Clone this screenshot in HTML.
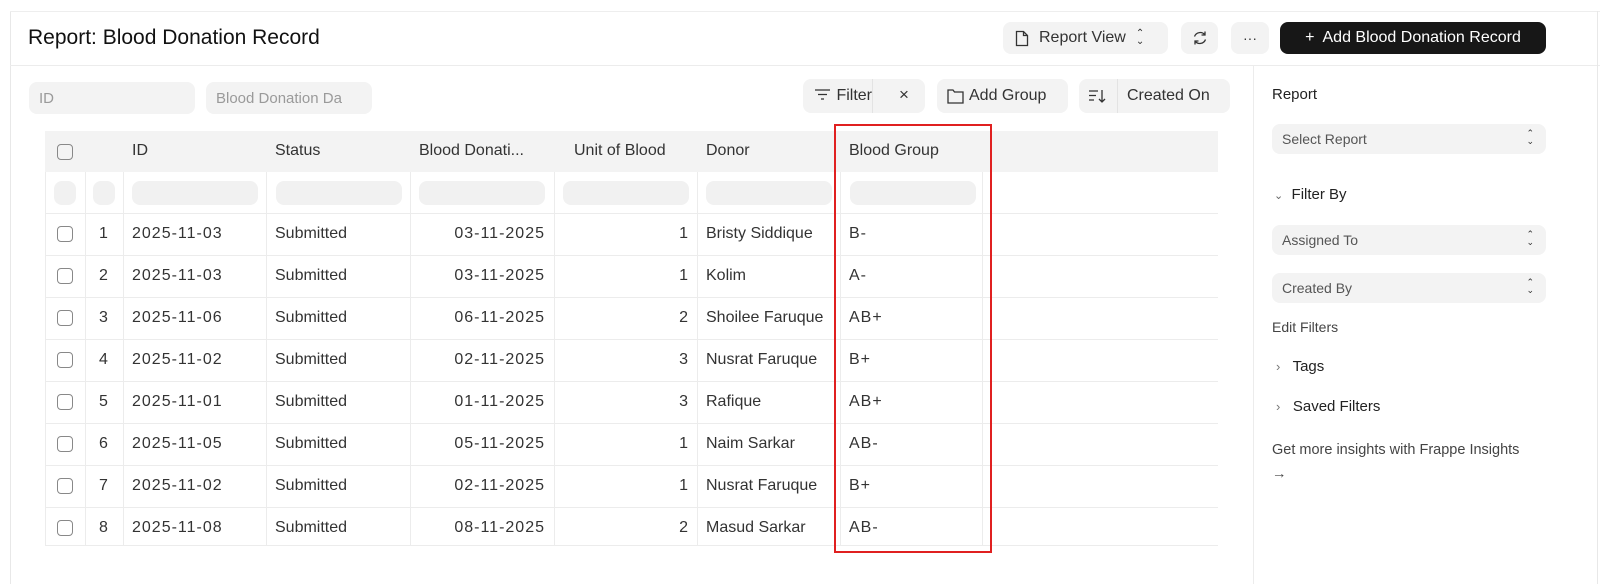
<!DOCTYPE html>
<html><head><meta charset="utf-8"><style>
*{box-sizing:border-box;margin:0;padding:0}
body{width:1600px;height:584px;background:#fff;font-family:"Liberation Sans",sans-serif;color:#1f1f1f;position:relative;overflow:hidden}
.a{position:absolute}
.btn{position:absolute;background:#f3f3f3;border-radius:8px;font-size:16px;color:#333;display:flex;align-items:center}
.inp{position:absolute;background:#f3f3f3;border-radius:8px;font-size:15px;color:#9a9a9a;display:flex;align-items:center;padding-left:10px}
.sel{position:absolute;left:1272px;width:274px;height:30px;background:#f3f3f3;border-radius:8px;font-size:14px;color:#555;display:flex;align-items:center;padding-left:10px}
.sel:after{content:"⌃\A⌄";white-space:pre;position:absolute;right:12px;top:5px;font-size:9px;line-height:8px;color:#333}
.cell{position:absolute;font-size:16px;color:#333;white-space:nowrap;overflow:hidden}
.hl{position:absolute;left:45px;width:1173px;height:1px;background:#ececec}
.vl{position:absolute;width:1px;background:#ececec}
.pill{position:absolute;height:24px;background:#f1f1f1;border-radius:8px}
.cb{position:absolute;left:57px;width:16px;height:16px;border:1.5px solid #888;border-radius:4px}
</style></head><body>
<div class="a" style="left:10px;top:11px;width:1px;height:573px;background:#e8e8e8"></div>
<div class="a" style="left:10px;top:11px;width:1590px;height:1px;background:#eee"></div>
<div class="a" style="left:10px;top:65px;width:1590px;height:1px;background:#ececec"></div>
<div class="a" style="left:1253px;top:66px;width:1px;height:518px;background:#ececec"></div>
<div class="a" style="left:1597px;top:11px;width:1px;height:573px;background:#e8e8e8"></div>
<div class="a" style="left:28px;top:26px;font-size:21px;color:#111">Report: Blood Donation Record</div>

<div class="btn" style="left:1003px;top:22px;width:165px;height:32px;padding-left:12px">
<svg width="14" height="17" viewBox="0 0 14 17" style="margin-right:10px"><path d="M1.5 1.5h7l4 4v10h-11z M8.5 1.5v4h4" fill="none" stroke="#333" stroke-width="1.3"/></svg>Report View <span style="font-size:10px;margin-left:10px;line-height:8px">⌃<br>⌄</span></div>
<div class="btn" style="left:1181px;top:22px;width:37px;height:32px;justify-content:center">
<svg width="18" height="18" viewBox="0 0 18 18"><path d="M3.5 7.5A6 6 0 0 1 14 6M14.5 10.5A6 6 0 0 1 4 12M14 2.5V6h-3.5M4 15.5V12h3.5" fill="none" stroke="#333" stroke-width="1.3"/></svg></div>
<div class="btn" style="left:1231px;top:22px;width:38px;height:32px;justify-content:center;font-size:14px">···</div>
<div class="btn" style="left:1280px;top:22px;width:266px;height:32px;background:#171717;color:#fff;justify-content:center;font-size:16px">+&nbsp; Add Blood Donation Record</div>

<div class="inp" style="left:29px;top:82px;width:166px;height:32px">ID</div>
<div class="inp" style="left:206px;top:82px;width:166px;height:32px;overflow:hidden;white-space:nowrap">Blood Donation Da</div>

<div class="btn" style="left:803px;top:79px;width:122px;height:34px">
<span style="margin-left:12px;width:17px;display:inline-block"><svg width="15" height="11"><path d="M0 1h15M3 5.5h9M6 10h3" stroke="#333" stroke-width="1.3"/></svg></span>&nbsp;Filter
<span class="a" style="left:69px;top:0;width:1px;height:34px;background:#e3e3e3"></span>
<span class="a" style="left:96px;top:6px;font-size:17px">×</span></div>
<div class="btn" style="left:937px;top:79px;width:131px;height:34px;padding-left:10px">
<svg width="17" height="16" viewBox="0 0 17 16" style="margin-right:5px"><path d="M1 2h5l1.5 2H16v11H1z" fill="none" stroke="#333" stroke-width="1.3"/></svg>Add Group</div>
<div class="btn" style="left:1079px;top:79px;width:151px;height:34px">
<svg width="18" height="14" style="margin-left:10px"><path d="M0 2h9M0 6.5h7M0 11h5M13 1v12M10 10l3 3 3-3" fill="none" stroke="#333" stroke-width="1.3"/></svg>
<span class="a" style="left:38px;top:0;width:1px;height:34px;background:#e3e3e3"></span>
<span style="margin-left:20px">Created On</span></div>

<div class="a" style="left:1272px;top:86px;font-size:15px;color:#222">Report</div>
<div class="sel" style="top:124px">Select Report</div>
<div class="a" style="left:1274px;top:186px;font-size:15px;color:#222"><span style="font-size:11px;color:#666">⌄</span>&nbsp; Filter By</div>
<div class="sel" style="top:225px">Assigned To</div>
<div class="sel" style="top:273px">Created By</div>
<div class="a" style="left:1272px;top:319px;font-size:14px;color:#444">Edit Filters</div>
<div class="a" style="left:1276px;top:358px;font-size:15px;color:#222"><span style="color:#777;font-size:13px">›</span>&nbsp;&nbsp; Tags</div>
<div class="a" style="left:1276px;top:398px;font-size:15px;color:#222"><span style="color:#777;font-size:13px">›</span>&nbsp;&nbsp; Saved Filters</div>
<div class="a" style="left:1272px;top:438px;font-size:14.5px;color:#444;line-height:24px">Get more insights with Frappe Insights<br>→</div>

<div class="a" style="left:45px;top:131px;width:1173px;height:41px;background:#f3f3f3"></div>
<div class="a" style="left:45px;top:172px;width:1px;height:373px;background:#ececec"></div>
<div class="hl" style="top:213px"></div>
<div class="hl" style="top:545px"></div>
<div id="t"></div>
<div class="cb" style="top:144px"></div>
<div class="cell" style="left:132px;top:142px">ID</div>
<div class="cell" style="left:275px;top:142px">Status</div>
<div class="cell" style="left:419px;top:142px">Blood Donati...</div>
<div class="cell" style="left:574px;top:142px">Unit of Blood</div>
<div class="cell" style="left:706px;top:142px">Donor</div>
<div class="cell" style="left:849px;top:142px">Blood Group</div>
<div class="pill" style="left:54px;top:181px;width:22px"></div>
<div class="pill" style="left:93px;top:181px;width:22px"></div>
<div class="pill" style="left:132px;top:181px;width:126px"></div>
<div class="pill" style="left:276px;top:181px;width:126px"></div>
<div class="pill" style="left:419px;top:181px;width:126px"></div>
<div class="pill" style="left:563px;top:181px;width:126px"></div>
<div class="pill" style="left:706px;top:181px;width:126px"></div>
<div class="pill" style="left:850px;top:181px;width:126px"></div>
<div class="a" style="left:834px;top:124px;width:158px;height:429px;border:2px solid #e02020"></div>
<script>
const rows=[["2025-11-03","03-11-2025",1,"Bristy Siddique","B-"],["2025-11-03","03-11-2025",1,"Kolim","A-"],["2025-11-06","06-11-2025",2,"Shoilee Faruque","AB+"],["2025-11-02","02-11-2025",3,"Nusrat Faruque","B+"],["2025-11-01","01-11-2025",3,"Rafique","AB+"],["2025-11-05","05-11-2025",1,"Naim Sarkar","AB-"],["2025-11-02","02-11-2025",1,"Nusrat Faruque","B+"],["2025-11-08","08-11-2025",2,"Masud Sarkar","AB-"]];
let h="";
[85,123,266,410,554,697,840,982].forEach(x=>h+=`<div class="vl" style="left:${x}px;top:172px;height:373px"></div>`);
rows.forEach((r,i)=>{const y=213+i*42;
if(i>0)h+=`<div class="hl" style="top:${y}px"></div>`;
const ty=y+12;
h+=`<div class="cb" style="top:${y+13}px"></div>
<div class="cell" style="left:99px;top:${ty}px">${i+1}</div>
<div class="cell" style="left:132px;top:${ty}px;letter-spacing:1px">${r[0]}</div>
<div class="cell" style="left:275px;top:${ty}px">Submitted</div>
<div class="cell" style="left:410px;width:135px;text-align:right;top:${ty}px;letter-spacing:1px">${r[1]}</div>
<div class="cell" style="left:554px;width:134px;text-align:right;top:${ty}px">${r[2]}</div>
<div class="cell" style="left:706px;width:128px;top:${ty}px">${r[3]}</div>
<div class="cell" style="left:849px;top:${ty}px;letter-spacing:1px">${r[4]}</div>`});
document.getElementById("t").innerHTML=h;
</script>
</body></html>
